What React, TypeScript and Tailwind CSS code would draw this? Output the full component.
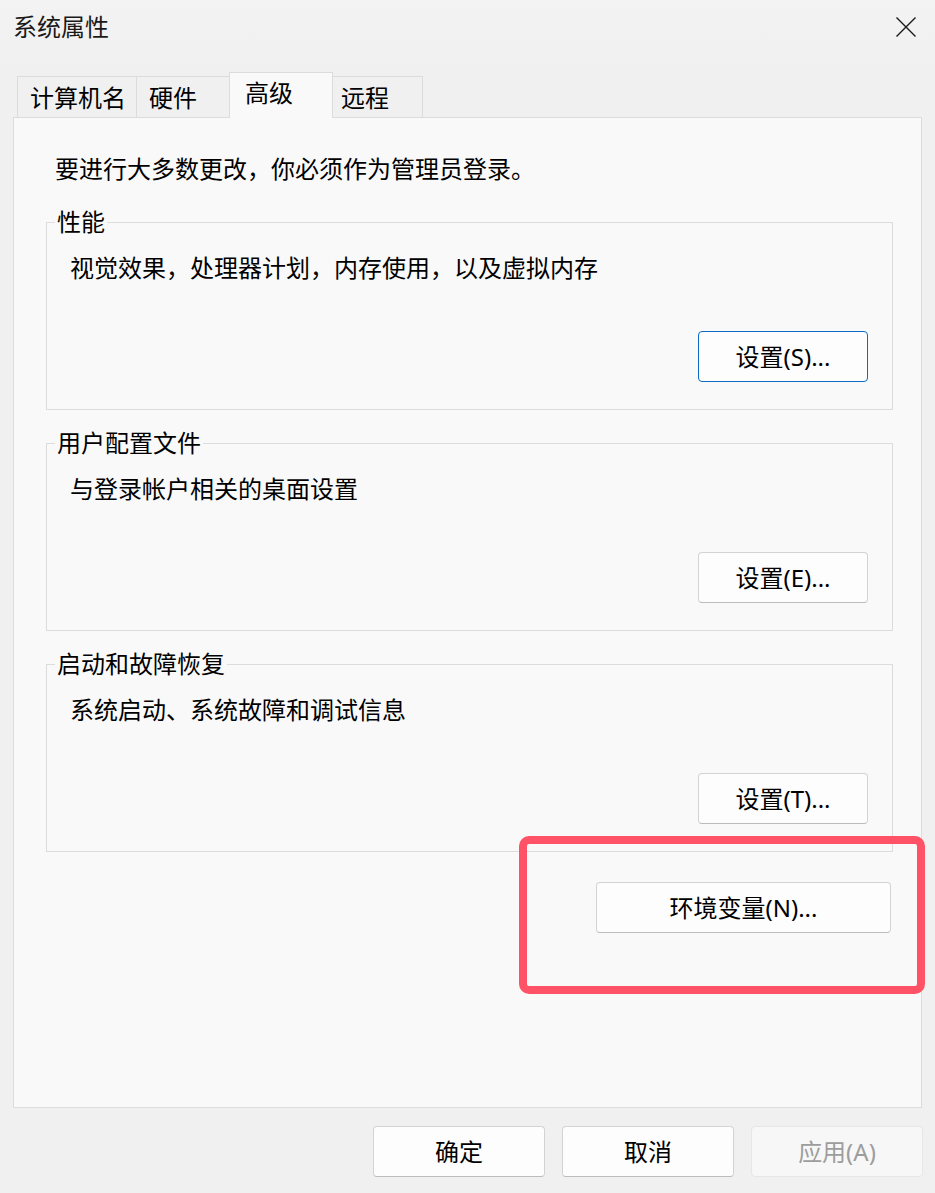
import React from "react";

function Btn({
  children,
  w,
  focused = false,
  disabled = false,
}: {
  children: React.ReactNode;
  w: string;
  focused?: boolean;
  disabled?: boolean;
}) {
  const base =
    "h-[51px] rounded-[4px] border flex items-center justify-center text-[24px] leading-[30px] " + w;
  let cls = base;
  if (disabled) cls += " bg-[#f7f7f7] border-[#e6e6e6] text-[#9d9d9d]";
  else if (focused) cls += " bg-[#fdfdfd] border-[#0a6cc4] text-black";
  else cls += " bg-[#fdfdfd] border-[#d3d3d3] border-b-[#bcbcbc] text-black";
  return <div className={cls}>{children}</div>;
}

function Group({
  title,
  desc,
  btn,
  focused = false,
}: {
  title: string;
  desc: string;
  btn: string;
  focused?: boolean;
}) {
  return (
    <fieldset className="border border-[#dcdcdc] pl-[8px] pr-[24px] pb-[27px]">
      <legend className="px-[2px] leading-[30px]">{title}</legend>
      <div className="pl-[15px] mt-[16px] leading-[30px]">{desc}</div>
      <div className="flex justify-end mt-[48px]">
        <Btn w="w-[170px]" focused={focused}>
          {btn}
        </Btn>
      </div>
    </fieldset>
  );
}

export default function App() {
  return (
    <div className="relative w-[935px] h-[1193px] bg-[#f0f0f0] overflow-hidden text-black text-[24px] font-['Noto_Sans','Noto_Sans_CJK_SC',sans-serif]">
      {/* title bar */}
      <div className="h-[72px] flex justify-between bg-gradient-to-b from-[#f3f3f3] to-[#f0f0f0]">
        <div className="pl-[13px] pt-[12px] text-[24px] leading-[30px] text-[#1a1a1a]">系统属性</div>
        <svg className="mt-[17px] mr-[19px]" width="20" height="20" viewBox="0 0 20 20">
          <path d="M0.5 0.5 L19.5 19.5 M19.5 0.5 L0.5 19.5" stroke="#1a1a1a" strokeWidth="1.4" fill="none" />
        </svg>
      </div>

      {/* tabs */}
      <div className="flex items-end h-[45px] pl-[17px] leading-[30px]">
        <div className="w-[120px] h-[41px] border border-b-0 border-[#dcdcdc] pl-[12px] pt-[5.5px]">计算机名</div>
        <div className="w-[92px] h-[41px] border-t border-[#dcdcdc] pl-[12px] pt-[5.5px]">硬件</div>
        <div className="relative z-10 -mb-px w-[104px] h-[46px] border border-b-0 border-[#dcdcdc] bg-[#f9f9f9] pl-[15px] pt-[4.5px]">
          高级
        </div>
        <div className="w-[90px] h-[41px] border-t border-r border-[#dcdcdc] pl-[8px] pt-[5.5px]">远程</div>
      </div>

      {/* panel */}
      <div className="mx-[13px] h-[991px] border border-[#dcdcdc] bg-[#f9f9f9] flex flex-col">
        <div className="pl-[41px] pt-[36px] leading-[30px]">要进行大多数更改，你必须作为管理员登录。</div>
        <div className="ml-[32px] w-[847px] mt-[23px] flex flex-col gap-[18px]">
          <Group title="性能" desc="视觉效果，处理器计划，内存使用，以及虚拟内存" btn="设置(S)..." focused />
          <Group title="用户配置文件" desc="与登录帐户相关的桌面设置" btn="设置(E)..." />
          <Group title="启动和故障恢复" desc="系统启动、系统故障和调试信息" btn="设置(T)..." />
        </div>
        <div className="flex justify-end mt-[30px] pr-[30px]">
          <Btn w="w-[295px]">环境变量(N)...</Btn>
        </div>
      </div>

      {/* bottom buttons */}
      <div className="flex justify-end gap-[17px] mt-[18px] pr-[12px]">
        <Btn w="w-[172px]">确定</Btn>
        <Btn w="w-[172px]">取消</Btn>
        <Btn w="w-[172px]" disabled>
          应用(A)
        </Btn>
      </div>

      {/* highlight */}
      <div className="absolute left-[519px] top-[836px] w-[406px] h-[158px] border-[8px] border-[#ff5266] rounded-[10px]" />
    </div>
  );
}
